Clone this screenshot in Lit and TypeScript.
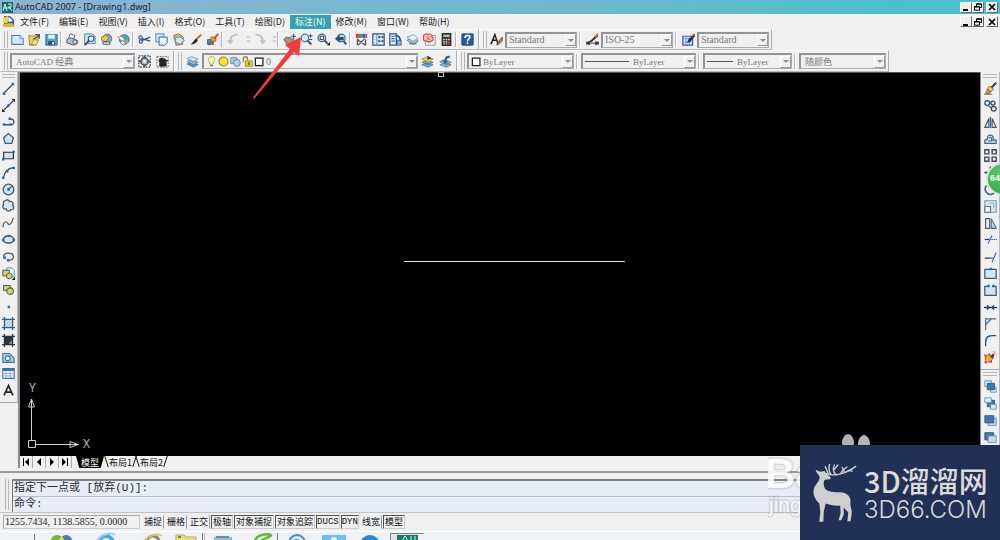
import { LitElement, html, svg, css, nothing } from "lit";
import { customElement, state } from "lit/decorators.js";
import { classMap } from "lit/directives/class-map.js";

const INK = "#3c4a5a";
const BLUE = "#1c6fc4";
const PALE = "#cfe4f4";
const GOLD = "#e8b030";

const glyphs: Record<string, unknown> = {
  fresh: svg`<path d="M1 3h10l4 4v7H1z" fill="#d5ecfa" stroke="#4a7fae" stroke-width="1.3"/><path d="M11 3v4h4" fill="#fff" stroke="#4a7fae"/>`,
  open: svg`<path d="M1 3l5 1 8-2-2 5-4 8H2z" fill="#f3cf6a" stroke="#8a7338"/><path d="M6 8l8-5M9 2h5v5" stroke="#555" stroke-width="1.6" fill="none"/><path d="M4 14l3-6 6 1-3 6z" fill="#f9dc7c" stroke="#a78127"/>`,
  save: svg`<path d="M1 2h14v13H1z" fill="#5e9bd3" stroke="#2c5f92"/><path d="M4 2h8v5H4z" fill="#e5f0f8"/><path d="M4 10h8v5H4z" fill="#28517c"/><path d="M9 11h2v3H9z" fill="#fff"/>`,
  print: svg`<path d="M5 1l6 2-2 5-6-1z" fill="#fff" stroke="${INK}"/><path d="M1 8l5-2 8 3v4l-5 2-8-3z" fill="#aebfd0" stroke="${INK}"/><circle cx="11" cy="11" r="2.5" fill="#dce6ee" stroke="${INK}"/>`,
  preview: svg`<path d="M2 1h9l4 3v9H2z" fill="#bfe0f5" stroke="#4379aa"/><circle cx="10" cy="7" r="3.4" fill="#e6f5fd" stroke="#35577b" stroke-width="1.3"/><path d="M7.5 9.5L2 15" stroke="${INK}" stroke-width="2.2"/>`,
  publish: svg`<circle cx="9" cy="7" r="5.5" fill="#78b1e0" stroke="#375f87"/><path d="M2 5l6-3 3 4-4 5-5-2z" fill="#f2c54e" stroke="#8a6a1d"/><path d="M3 11h9v3H4z" fill="#d9e4ee" stroke="${INK}"/>`,
  globe: svg`<circle cx="9" cy="8" r="6" fill="#5da2da" stroke="#2d5f8e"/><path d="M9 2l5 3-3 4-4-2z" fill="#3fae9c"/><path d="M10 10l4-1-2 5z" fill="#e8b030"/><path d="M1 5l5-1 4 5-3 2z" fill="#f7f2dd" stroke="#87712f" stroke-width=".8"/><path d="M6 9l5 3-3 3-4-3z" fill="#eef6fc" stroke="#4379aa"/>`,
  cut: svg`<path d="M15 5L5 9M15 10L5 7" stroke="${INK}" stroke-width="1.5"/><circle cx="3" cy="5.5" r="2" fill="none" stroke="#345f94" stroke-width="1.5"/><circle cx="3.5" cy="10.5" r="2" fill="none" stroke="#345f94" stroke-width="1.5"/>`,
  copy: svg`<rect x="1" y="1" width="10" height="10" fill="#c8e2f5" stroke="#4a7fae"/><path d="M5 5h10v7l-3 3H5z" fill="#e8f5fd" stroke="#3c6c9b" stroke-width="1.2"/>`,
  paste: svg`<path d="M2 3l6-2 6 4-1 9-8 1z" fill="#eec15c" stroke="#7b622a"/><path d="M4 5h7l4 4-5 5-6-3z" fill="#cce6f7" stroke="#3f75a6"/>`,
  brush: svg`<path d="M15 2L8 9" stroke="#b0763a" stroke-width="2.5"/><path d="M9 7l2 2c-2 4-5 5-9 5 3-2 4-6 7-7z" fill="#2a2c30"/>`,
  block: svg`<path d="M2 8h7v6H2z" fill="#4e8ccb" stroke="#24507e"/><path d="M6 5h6v5H6z" fill="#f1a33c" stroke="#9c5b15"/><path d="M15 1l-5 6" stroke="#c44d28" stroke-width="2.4"/><path d="M3 15l3-4" stroke="#d03a22" stroke-width="2"/>`,
  undo: svg`<path d="M13 2C7 2 4 5 4 10" fill="none" stroke="#bdbdc8" stroke-width="2.4"/><path d="M0 9h8l-4 5z" fill="#bdbdc8"/>`,
  redo: svg`<path d="M3 2c6 0 9 3 9 8" fill="none" stroke="#bdbdc8" stroke-width="2.4"/><path d="M8 9h8l-4 5z" fill="#bdbdc8"/>`,
  drop: svg`<path d="M6 4h4v2H6zM5 9h6l-3 3z" fill="#c9c9d2"/>`,
  pan: svg`<path d="M1 8l3-3 6 1 3 3-3 5H5z" fill="#b98c86" stroke="#6e4d4a"/><path d="M13 1v7M9.500 4h7" stroke="#2c5d90" stroke-width="1.5"/>`,
  zoom: svg`<circle cx="6" cy="6" r="4.500" fill="#d9eefb" stroke="#57789b" stroke-width="1.5"/><path d="M9 9l5 5" stroke="${INK}" stroke-width="2.3"/><path d="M13 1v5M10.500 3.500h5M11 8h4" stroke="#2b5482" stroke-width="1.2"/>`,
  zoomwin: svg`<circle cx="6" cy="6" r="4.700" fill="#b3d3ec" stroke="#4a6b8d" stroke-width="1.5"/><path d="M4 4h4v4H4z" fill="#fff" stroke="#222"/><path d="M9 9l4 4" stroke="${INK}" stroke-width="2.3"/><path d="M12 15h4v-4z" fill="#111"/>`,
  zoomprev: svg`<circle cx="9" cy="6" r="4.700" fill="#c3def2" stroke="#4a6b8d" stroke-width="1.5"/><path d="M12 10l3 4" stroke="${INK}" stroke-width="2.3"/><path d="M1 7l6-5v3h5v4H7v3z" fill="#264e80"/>`,
  props: svg`<path d="M1 1h4v5H1z" fill="#e33a35"/><path d="M5 1h4v5H5z" fill="#37a64c"/><path d="M9 1h4v5H9z" fill="#3559d1"/><path d="M13 1h2v5h-2z" fill="#b34bc4"/><path d="M3 8l10 7M12 7L4 15M3 7v8M13 8v7" stroke="#5a4656" stroke-width="1.5"/>`,
  grid: svg`<path d="M1 1h14v14H1z" fill="#e9f3fb" stroke="#31577f" stroke-width="1.5"/><path d="M6 1v14M3 4h1M3 8h1M3 12h1M8 4h2v2H8zM12 4h2v2h-2zM8 9h2v2H8zM12 9h2v2h-2z" fill="#426e9c" stroke="#426e9c"/>`,
  palette: svg`<path d="M1 1h8v14H1z" fill="#e3f0fa" stroke="#31577f" stroke-width="1.5"/><path d="M3 4h4M3 7h4M3 10h4" stroke="${BLUE}" stroke-width="1.5"/><path d="M8 3c5 0 6 3 6 7" fill="none" stroke="#24476f" stroke-width="2"/><path d="M10 9h5v6h-5z" fill="#86b8e3" stroke="#31577f"/>`,
  sheets: svg`<path d="M1 9l8-4 6 5-6 4z" fill="#9bc5df" stroke="#557d99"/><path d="M1 5l9-3 5 5-7 3z" fill="#e1eef4" stroke="#8398a5"/><path d="M4 13h9" stroke="#72838e" stroke-width="2"/>`,
  markup: svg`<path d="M3 3h12v12H3z" fill="#f3f4f6" stroke="#7f8b96"/><path d="M2 2c2-2 4 0 4 0 3-2 6 1 5 3 3 2 1 5-1 5-2 2-4 1-5 0-4 1-5-2-4-4-1-2 0-4 1-4z" fill="#f7c3c0" stroke="#d8403a" stroke-width="1.300"/><path d="M4 4l5 5M9 4L4 9" stroke="#d8403a"/>`,
  calc: svg`<path d="M2 0h12v16H2z" fill="#332b2b"/><path d="M4 2h8v3H4z" fill="#8fd0a0"/><path d="M4 7h2v2H4zM7 7h2v2H7zM10 7h2v2h-2zM4 10h2v2H4zM7 10h2v2H7zM4 13h2v1H4zM7 13h2v1H7z" fill="#e2d7d7"/><path d="M10 10h2v4h-2z" fill="#d24a3c"/>`,
  help: svg`<rect x="1" y="1" width="14" height="14" rx="1" fill="#235c99" stroke="#173f6d"/><path d="M5 6c0-4 6-4 6-1 0 2-3 2-3 5" stroke="#fff" stroke-width="2" fill="none"/><path d="M7 11.500h2v2H7z" fill="#fff"/>`,
  textstyle: svg`<path d="M1 14L6 2l4 12M3 9h6" stroke="#222" stroke-width="1.800" fill="none"/><path d="M15 5l-5 6-2 4 4-2 4-5z" fill="#c77b39" stroke="#333" stroke-width=".8"/>`,
  dimstyle: svg`<path d="M1 10v5M15 10v5M1 12.500h14M1 12.500l3-2v4zM15 12.500l-3-2v4z" stroke="#222" fill="#222"/><path d="M14 1L6 9l-3 1 3 2 9-8z" fill="#3a3533"/><path d="M15 1l-4 4" stroke="#c77b39" stroke-width="2"/>`,
  tablestyle: svg`<path d="M1 4h12v11H1z" fill="#d7e8fa" stroke="#2f5fae" stroke-width="1.500"/><path d="M1 7h12M5 4v11M9 4v11M1 11h12" stroke="#5f92d8"/><path d="M15 1L8 8l-2 4 4-1 6-7z" fill="#2f2d2d"/><path d="M15 1l-3 3" stroke="#c77b39" stroke-width="2"/>`,
  gear: svg`<path d="M1 1h14v14H1z" fill="none" stroke="#333" stroke-dasharray="2 1.500" stroke-width="1.500"/><circle cx="8" cy="8" r="4.500" fill="#a9b9c7" stroke="#3c4d5d" stroke-width="1.800"/><circle cx="8" cy="8" r="1.700" fill="#eee"/><path d="M8 1v3M8 12v3M1 8h3M12 8h3" stroke="#3c4d5d" stroke-width="2"/>`,
  workspace: svg`<path d="M1 2h14v13H1z" fill="none" stroke="#444" stroke-dasharray="2 1.500"/><path d="M4 4h6l3 2v8H4z" fill="#23272c"/><path d="M3 7h12M7 3v12" stroke="#23272c" stroke-width="1.500"/>`,
  layers: svg`<path d="M1 11l6-2 8 3-6 3z" fill="#5d92bd" stroke="#3e6a90" stroke-width=".8"/><path d="M1 8l6-2 8 3-6 3z" fill="#8db9d9" stroke="#3e6a90" stroke-width=".8"/><path d="M1 4l6-2 8 3-6 3z" fill="#cde3f2" stroke="#5c86a8" stroke-width=".8"/>`,
  bulb: svg`<path d="M8 1c-5 0-6 5-3 8l1 3h4l1-3c3-3 2-8-3-8z" fill="#fcf6a8" stroke="#a29b3a" stroke-width="1.200"/><path d="M6 13h4v2H6z" fill="#777"/>`,
  sun: svg`<circle cx="8" cy="8" r="6.500" fill="#f4e531" stroke="#8d8a3c" stroke-width="1.600"/>`,
  freeze: svg`<path d="M1 2h9v9H1z" fill="#a9cbe0" stroke="#5d8199"/><circle cx="10" cy="10" r="5" fill="#b9d3e2" stroke="#5d8199" stroke-width="1.300"/>`,
  lock: svg`<path d="M2 9V4c0-4 6-4 6 0v2" fill="none" stroke="#9a8d25" stroke-width="2"/><path d="M5 7h10v8H5z" fill="#dfd02e" stroke="#7f7520"/><path d="M9 9h2v4H9z" fill="#5d5618"/>`,
  swatch: svg`<path d="M2 3h11v11H2z" fill="#fff" stroke="#222" stroke-width="1.800"/>`,
  layerprev: svg`<path d="M1 12l6-2 8 2-6 3zM1 9l6-2 8 2-6 3z" fill="#7aaed2" stroke="#3e6a90" stroke-width=".8"/><path d="M1 5l7-3 7 3-6 4z" fill="#f0d24e" stroke="#8d7420" stroke-width=".8"/><path d="M8 1v5l5-2" fill="#333"/>`,
  layerstate: svg`<path d="M1 12l6-2 8 2-6 3zM1 8l6-2 8 3-6 3z" fill="#8fb7d4" stroke="#3e6a90" stroke-width=".8"/><path d="M13 1c-5 0-6 2-6 6L4 5l3 6 5-4-3 0c0-2 2-4 5-4z" fill="#2f608f"/>`,
  line: svg`<path d="M2 14L14 2" stroke="#333" stroke-width="1.500"/><path d="M1 13h3v3H1zM12 1h3v3h-3z" fill="${BLUE}"/>`,
  xline: svg`<path d="M2 14L14 2" stroke="#333" stroke-width="1.500"/><path d="M0 12l4 4H0zM12 0h4v4z" fill="#222"/><circle cx="8" cy="8" r="1.700" fill="${BLUE}"/>`,
  pline: svg`<path d="M2 12h9c5 0 5-7-1-7" fill="none" stroke="#44505c" stroke-width="1.700"/><path d="M1 10h3v3H1zM8 3h3v3H8zM9 10h3v3H9z" fill="${BLUE}"/>`,
  polygon: svg`<path d="M8 2l6 5-2 7H4L2 7z" fill="${PALE}" stroke="#4a5661" stroke-width="1.600"/>`,
  rect: svg`<path d="M2 4h12v8H2z" fill="${PALE}" stroke="#333" stroke-width="1.500"/><path d="M0 11h3v3H0zM13 2h3v3h-3z" fill="${BLUE}"/>`,
  arc: svg`<path d="M2 14C3 7 7 3 14 2" fill="none" stroke="#444" stroke-width="1.500"/><path d="M0 13h3v3H0zM5 5h3v3H5zM13 1h3v3h-3z" fill="${BLUE}"/>`,
  circle: svg`<circle cx="8" cy="8" r="6.500" fill="${PALE}" stroke="#4a5661" stroke-width="1.600"/><path d="M8 8l4-4" stroke="${BLUE}" stroke-width="1.500"/><circle cx="8" cy="8" r="1.800" fill="${BLUE}"/>`,
  cloud: svg`<path d="M4 2c3-2 5 0 5 1 3-1 6 2 4 5 3 2 1 6-2 5-2 3-6 2-6-1-4 1-5-3-3-5-1-2 0-5 2-5z" fill="${PALE}" stroke="#4a5661" stroke-width="1.500"/>`,
  spline: svg`<path d="M1 14c1-8 4-8 6-5s5 1 7-7" fill="none" stroke="#555" stroke-width="1.400"/>`,
  ellipse: svg`<ellipse cx="8" cy="8" rx="6.500" ry="4.500" fill="${PALE}" stroke="#333" stroke-width="1.500"/><path d="M0 7h3v3H0zM13 7h3v3h-3zM7 2h3v3H7z" fill="${BLUE}"/>`,
  elarc: svg`<path d="M3 10C0 6 5 3 9 4c6 0 8 8-1 9" fill="none" stroke="#536170" stroke-width="1.600"/><path d="M2 8h3v3H2zM6 11h3v3H6z" fill="${BLUE}"/>`,
  insert: svg`<path d="M6 1h6l3 3v8H6z" fill="#e5f2fb" stroke="#4a7fae"/><path d="M1 4h8v7H1z" fill="#e8d24d" stroke="#365f88" stroke-width="1.200"/><circle cx="9" cy="11" r="3.500" fill="#e8d24d" stroke="#365f88" stroke-width="1.200"/><path d="M12 16h4v-4z" fill="#111"/>`,
  make: svg`<path d="M2 3h8v6H2z" fill="#e8d24d" stroke="#365f88" stroke-width="1.300"/><circle cx="10" cy="10" r="4" fill="#e8d24d" stroke="#365f88" stroke-width="1.300"/>`,
  point: svg`<path d="M7 7h3v3H7z" fill="${BLUE}"/>`,
  hatch: svg`<path d="M3 3h10v10H3z" fill="#a8cdee"/><path d="M0 3h16M0 13h16M3 0v16M13 0v16" stroke="#2f5f91" stroke-width="1.600"/><path d="M4 8l4-4M4 12l8-8M8 12l4-4" stroke="#fff"/>`,
  gradient: svg`<path d="M3 3h10v10H3z" fill="#2c3340"/><path d="M8 12l5-5v6z" fill="#9a9250"/><path d="M0 3h16M0 13h16M3 0v16M13 0v16" stroke="#253649" stroke-width="1.600"/>`,
  region: svg`<path d="M1 3h8l6 6v5H1z" fill="#a9cdea" stroke="#3d70a3" stroke-width="1.300"/><circle cx="7" cy="9" r="3" fill="#eef6fc" stroke="#3d70a3" stroke-width="1.300"/>`,
  table: svg`<path d="M1 2h14v12H1z" fill="#fff" stroke="#3b6fbb" stroke-width="1.300"/><path d="M1 2h14v3H1z" fill="#3b6fbb"/><path d="M1 8h14M1 11h14M5 4v10M10 4v10" stroke="#7ba3dc"/>`,
  mtext: svg`<path d="M2.500 14L8 2l5.500 12M4.500 10h7" fill="none" stroke="#222" stroke-width="2"/>`,
  erase: svg`<path d="M15 1L9 7" stroke="#35404c" stroke-width="2.500"/><path d="M7 5l5 4-4 3-4-4z" fill="#f3c94d" stroke="#7a6633"/><path d="M4 9l4 3-1 2H2z" fill="#e08575" stroke="#7c4238" stroke-width=".8"/><path d="M0 15h10" stroke="#444"/>`,
  copyobj: svg`<circle cx="4" cy="5" r="3" fill="#d3e5f3" stroke="#3b4a59" stroke-width="1.500"/><path d="M5 8l5 4M8 4h4" stroke="${BLUE}" stroke-width="1.300"/><circle cx="11" cy="5" r="2.500" fill="#d3e5f3" stroke="#3b4a59" stroke-width="1.500"/><circle cx="12" cy="12" r="3" fill="#d3e5f3" stroke="#3b4a59" stroke-width="1.500"/>`,
  mirror: svg`<path d="M6 3v11H1zM10 3v11h5z" fill="#dbe7f0" stroke="#4a5661" stroke-width="1.400"/><path d="M8 1v14" stroke="${BLUE}" stroke-width="1.600"/>`,
  offset: svg`<path d="M1 14h14v-4h-4c3-7-8-9-7-1L1 10z" fill="#cfe4f4" stroke="#46647f" stroke-width="1.500"/><path d="M5 11h4c2-4-2-6-3-3" fill="none" stroke="${BLUE}" stroke-width="1.300"/>`,
  array: svg`<path d="M1 1h5v5H1zM10 1h5v5h-5zM1 10h5v5H1zM10 10h5v5h-5z" fill="#eee" stroke="#3b4a59" stroke-width="1.700"/>`,
  move: svg`<path d="M8 1v14M1 8h14" stroke="#34526f" stroke-width="1.500"/><path d="M8 0l2 3H6zM8 16l2-3H6zM0 8l3 2V6zM16 8l-3 2V6z" fill="#34526f"/>`,
  rotate: svg`<path d="M3 3C-1 9 4 15 9 14s6-5 5-8" fill="none" stroke="#3d6895" stroke-width="2"/>`,
  scale: svg`<path d="M1 1h14v14H1z" fill="#d9e9f5" stroke="#7594ad" stroke-width="1.300"/><path d="M1 8h7v7H1z" fill="#f4f8fb" stroke="#55748d" stroke-width="1.300"/><path d="M6 4h6v6" stroke="#8db4d4" stroke-width="1.500" fill="none"/>`,
  stretch: svg`<path d="M2 2h5v12H2z" fill="#eee" stroke="#4a5661" stroke-width="1.400"/><path d="M9 2l6 12H9z" fill="#bcd9ef" stroke="#3d70a3" stroke-width="1.300"/>`,
  trim: svg`<path d="M1 8h6" stroke="#333" stroke-width="1.500"/><path d="M5 13l5-10" stroke="${BLUE}" stroke-width="1.300"/><path d="M9 8h7" stroke="${BLUE}" stroke-width="1.500" stroke-dasharray="2 1"/>`,
  extend: svg`<path d="M1 10h7" stroke="#333" stroke-width="1.500"/><path d="M8 10h4" stroke="${BLUE}" stroke-width="1.500"/><path d="M10 15l5-12" stroke="${BLUE}" stroke-width="1.300"/>`,
  breakpt: svg`<path d="M1 3h14v11H1z" fill="${PALE}" stroke="#4a5661" stroke-width="1.500"/><path d="M7 1h3v3H7z" fill="${BLUE}"/>`,
  break: svg`<path d="M5 3H1v11h14V3h-4" fill="${PALE}" stroke="#4a5661" stroke-width="1.500"/><path d="M4 1h3v3H4zM10 1h3v3h-3z" fill="${BLUE}"/>`,
  join: svg`<path d="M0 8h16" stroke="#222" stroke-width="1.500"/><path d="M4 5l3 3-3 3zM12 5L9 8l3 3z" fill="#1e4e80" stroke="#1e4e80"/>`,
  chamfer: svg`<path d="M2 8l7-7" stroke="${BLUE}" stroke-width="1.500"/><path d="M2 15V1h13" stroke="#666" stroke-width="1.400" fill="none"/>`,
  fillet: svg`<path d="M2 15V10C2 4 5 2 10 2h5" fill="none" stroke="#444" stroke-width="1.500"/><path d="M2 10C2 4 5 2 10 2" fill="none" stroke="${BLUE}" stroke-width="1.800"/>`,
  explode: svg`<path d="M1 5l3 1 3-3 1 4 4 1-3 3v3l-4-1-4 2 1-4z" fill="${GOLD}" stroke="#c23b21" stroke-width="1.400" stroke-dasharray="3 1"/><path d="M9 8l3-4" stroke="#6f3024" stroke-width="3"/><path d="M12 4l2-3M15 4h1M11 1h2" stroke="#888"/>`,
  front: svg`<path d="M1 1h8v7H1zM8 9h7v6H8z" fill="#dcebf6" stroke="#5b86ab"/><path d="M4 4h9v8H4z" fill="#3e78ae" stroke="#265984"/>`,
  back: svg`<path d="M4 4h9v8H4z" fill="#3e78ae" stroke="#265984"/><path d="M1 1h8v6H1zM8 9h7v6H8z" fill="#dcebf6" stroke="#5b86ab"/>`,
  above: svg`<path d="M5 5h10v9H5z" fill="#c5dcee" stroke="#5b86ab"/><path d="M1 2h11v9H1z" fill="#3e78ae" stroke="#265984"/>`,
  under: svg`<path d="M1 2h11v9H1z" fill="#3e78ae" stroke="#265984"/><path d="M5 6h10v8H5z" fill="#c5dcee" stroke="#5b86ab"/>`,
};

const icon = (name: string) =>
  html`<svg class="icon" viewBox="0 0 16 16" aria-hidden="true">${glyphs[name]}</svg>`;

const MENUS = ["文件(F)", "编辑(E)", "视图(V)", "插入(I)", "格式(O)", "工具(T)", "绘图(D)", "标注(N)", "修改(M)", "窗口(W)", "帮助(H)"];
const STANDARD = [
  ["fresh", "open", "save"],
  ["print", "preview", "publish", "globe"],
  ["cut", "copy", "paste", "brush", "block"],
  ["undo", "drop", "redo", "drop"],
  ["pan", "zoom", "zoomwin", "zoomprev"],
  ["props", "grid", "palette", "sheets", "markup", "calc"],
  ["help"],
];
const DRAW = ["line", "xline", "pline", "polygon", "rect", "arc", "circle", "cloud", "spline", "ellipse", "elarc", "insert", "make", "point", "hatch", "gradient", "region", "table", "mtext"];
const MODIFY = ["erase", "copyobj", "mirror", "offset", "array", "move", "rotate", "scale", "stretch", "trim", "extend", "breakpt", "break", "join", "chamfer", "fillet", "explode"];
const ORDER = ["front", "back", "above", "under"];
const MODES: [string, boolean][] = [
  ["捕捉", false], ["栅格", false], ["正交", false], ["极轴", true], ["对象捕捉", true],
  ["对象追踪", true], ["DUCS", true], ["DYN", true], ["线宽", false], ["模型", true],
];

@customElement("app-root")
export class AppRoot extends LitElement {
  @state() private modes = new Map<string, boolean>(MODES);

  static styles = css`
    :host {
      display: flex; flex-direction: column; position: relative; height: 100vh; overflow: hidden;
      background: #f0f0f0; color: #1c1c1c;
      font: 9px/14px "Noto Sans", "Noto Sans CJK SC", sans-serif;
    }
    * { box-sizing: border-box; }
    button { font: inherit; color: inherit; border: 0; padding: 0; margin: 0; background: none; white-space: nowrap; }
    .title { flex: none; display: flex; align-items: center; height: 14px; padding: 0 2px; gap: 2px;
      background: linear-gradient(90deg, #8cb3d4, #6cb9cf 60%, #4cc0cd 90%); }
    .title h1 { flex: 1; margin: 0; font: 9px/14px "Noto Sans", sans-serif; color: #16222c; }
    .app { width: 11px; height: 11px; }
    .wins { display: flex; }
    .wins button { width: 12px; height: 11px; background: #f0f0f0; border: 1px solid #fff; border-right-color: #666; border-bottom-color: #666; display: grid; place-items: center; }
    .wins button:last-child { margin-left: 2px; }
    .wins svg { width: 8px; height: 8px; }
    .menu { flex: none; display: flex; align-items: center; height: 15px; padding: 0 2px; }
    .menu nav { flex: 1; display: flex; }
    .menu nav button { padding: 0 5px; height: 14px; font: 9px/13px "Noto Sans CJK SC", sans-serif; }
    .menu nav .hot { background: #35a0af; color: #fff; }
    .doc { width: 13px; height: 13px; }
    .row { flex: none; display: flex; align-items: stretch; height: 21px; }
    .row.second { height: 22px; }
    .bar { display: flex; align-items: center; border: 1px solid #fbfbfb; border-right-color: #a9abb0; border-bottom-color: #b7b9bd; padding: 0 2px; }
    .second .bar { gap: 1px; }
    .grip { flex: none; width: 4px; align-self: stretch; margin: 1px 1px; border: 1px solid #b4b7bc; border-width: 0 1px; }
    .tool { flex: none; width: 17px; height: 17px; display: grid; place-items: center; }
    .tool.slim { width: 9px; }
    .icon { width: 13px; height: 13px; display: block; overflow: hidden; }
    .sep { flex: none; width: 4px; height: 15px; border-left: 1px solid #b4b7bc; background: linear-gradient(90deg, #fff 1px, transparent 1px); }
    .combo + .sep { margin: 0 1px 0 2px; }
    .second .combo + .sep { margin: 0 0 0 1px; }
    .combo { display: flex; align-items: center; height: 16px; min-width: 0; border: 2px solid #92949a; border-right: 1px solid #a9abb0; border-bottom: 1px solid #a9abb0; background: #f0f0f0; gap: 1px; padding-left: 2px; }
    .combo .icon { flex: none; width: 11px; height: 11px; }
    .combo select { flex: 1; min-width: 0; width: 0; height: 12px; appearance: none; border: 0; padding: 0; margin: 0; background: none; color: #7a7a7a; opacity: 1; font: 10px/12px "Liberation Serif", "Noto Sans CJK SC", serif; }
    .combo.small select { font-size: 9px; }
    .combo.inset { padding-left: 4px; }
    .combo .stroke { flex: none; width: 44px; border-top: 1px solid #555; margin-right: 3px; }
    .combo .stroke.short { width: 26px; }
    .combo .arrow { flex: none; width: 11px; height: 12px; display: grid; place-items: center; border: 1px solid #fff; border-right-color: #999; border-bottom-color: #999; }
    .arrow::after { content: ""; border: 3px solid transparent; border-top-color: #8d8d8d; border-bottom: 0; }
    .w-space { width: 125px; } .w-layer { width: 216px; } .w-style { width: 72px; }
    .w-color { width: 107px; } .w-line { width: 115px; } .w-weight { width: 89px; } .w-plot { width: 87px; }
    .inner { display: flex; flex: 1; min-height: 0; }
    .side { flex: none; width: 18px; display: flex; flex-direction: column; }
    .side.right { width: 20px; border-left: 1px solid #8a8c90; }
    .strip { flex: none; display: flex; flex-direction: column; align-items: center; border-bottom: 1px solid #a9abb0; border-right: 1px solid #b7b9bd; padding-bottom: 3px; }
    .strip .hgrip { flex: none; align-self: stretch; height: 4px; margin: 2px 2px; border: 1px solid #b4b7bc; border-width: 1px 0; }
    .strip .tools { display: flex; flex-direction: column; }
    .tools.draw { height: 319px; } .tools.modify { height: 286px; } .tools.order { height: 68px; }
    .tools .tool { flex: 1; height: auto; min-height: 0; }
    .center { flex: 1; min-width: 0; display: flex; flex-direction: column; border-left: 2px solid #8a8c90; }
    .view { flex: 1; min-height: 0; position: relative; background: #000; border-top: 1px solid #555; }
    .view svg { position: absolute; }
    .entity { left: 40%; top: 188px; width: 23%; height: 1px; }
    .ucs { left: 5px; bottom: 4px; width: 70px; height: 80px; font: 12px "Noto Sans", sans-serif; }
    .mark { left: 418px; top: -1px; width: 6px; height: 5px; }
    .tabs { flex: none; height: 12px; display: flex; align-items: stretch; }
    .tabs .nav { width: 13px; display: grid; place-items: center; border-right: 1px solid #aaa; }
    .tabs .nav svg { width: 8px; height: 8px; }
    .tabs .tab { position: relative; padding: 0 3px; margin-right: 2px; font: 9px/11px "Noto Sans CJK SC", sans-serif; color: #111; }
    .tabs .tab::before, .tabs .tab::after { content: ""; position: absolute; top: 0; bottom: 1px; border-left: 1px solid #111; }
    .tabs .tab::before { left: 0; transform: skewX(18deg); }
    .tabs .tab::after { right: 0; transform: skewX(-18deg); }
    .tabs .tab.on { margin-left: 4px; padding: 0 5px; background: #000; color: #fff; clip-path: polygon(0 0, 100% 0, 88% 100%, 12% 100%); }
    .cmd { flex: none; display: flex; height: 42px; margin-top: 3px; border-top: 2px solid #96989c; padding-top: 6px; border-bottom: 1px solid #c0c2c6; }
    .cmd .grip { margin: 0 3px 2px 5px; }
    .log { flex: 1; display: flex; flex-direction: column; background: #e6edf8; border-left: 1px solid #777; border-top: 2px solid #808285;
      font: 11px/14px "Liberation Mono", "Noto Sans CJK SC", monospace; color: #2a2a2a; }
    .log p { margin: 0; height: 16px; border-bottom: 1px solid #b9bec6; padding-left: 1px; }
    .log label { display: flex; padding-left: 1px; height: 15px; line-height: 15px; }
    .log input { flex: 1; border: 0; background: none; outline: 0; font: inherit; padding: 0; }
    .status { flex: none; display: flex; align-items: center; gap: 1px; height: 18px; padding-left: 3px; }
    .coord { width: 137px; height: 14px; margin-right: 1px; padding-left: 1px; border: 1px solid #a5a7ab; border-right-color: #ccc; border-bottom-color: #ccc; font: 10px/12px "Liberation Serif", serif; }
    .mode { height: 14px; padding: 0 1px; border: 1px solid transparent; border-right-color: #999; font: 9px/12px "Noto Sans CJK SC", sans-serif; color: #111; }
    .mode.on { border-color: #555 #ccc #ccc #555; }
    .mode.latin { padding: 0; font: 9px/12px "Liberation Mono", monospace; }
    .task { flex: none; height: 9px; background: #eef1f6; border-top: 1px solid #fdfdfd; overflow: hidden; }
    .task svg { display: block; height: 9px; width: 430px; }
    .pointer { position: absolute; left: 250px; top: 34px; width: 54px; height: 66px; pointer-events: none; }
    .ball { position: absolute; right: -20px; top: 162px; width: 34px; height: 34px; border-radius: 50%; border: 2px solid #dcdedc; background: radial-gradient(circle at 50% 30%, #58ce6c, #2fa94a); color: #fff; font: bold 9px/29px "Liberation Sans", sans-serif; text-align: left; padding-left: 2px; }
    .stamp { position: absolute; right: 120px; bottom: 13px; width: 112px; height: 96px; pointer-events: none; font-family: "Liberation Sans", sans-serif; }
    .stamp text { fill: #fff; fill-opacity: .85; stroke: #999; stroke-opacity: .3; stroke-width: 3px; paint-order: stroke; }
    .brand { position: absolute; right: 0; bottom: 0; width: 200px; height: 95px; padding: 0 0 0 12px; display: flex; align-items: center; gap: 6px; background: #213056; color: #dadad8; }
    .brand svg { flex: none; width: 46px; height: 60px; }
    .brand div { display: flex; flex-direction: column; white-space: nowrap; }
    .brand strong { font: 500 29px/34px "Noto Sans CJK SC", sans-serif; }
    .brand span { font: 300 24px/26px "Inter", sans-serif; }
  `;

  private toggle(name: string) {
    const next = new Map(this.modes);
    next.set(name, !next.get(name));
    this.modes = next;
  }

  private tool(name: string) {
    return html`<button class=${classMap({ tool: true, slim: name === "drop" })} aria-label=${name}>${icon(name)}</button>`;
  }

  private combo(label: string, value: string, kind: string, lead: unknown = nothing) {
    return html`<span class="combo ${kind}">${lead}
      <select aria-label=${label}><option>${value}</option></select><span class="arrow"></span></span>`;
  }

  private windowButtons() {
    return html`<div class="wins">
      <button aria-label="最小化"><svg viewBox="0 0 8 8"><path d="M1 6h5v2H1z"/></svg></button>
      <button aria-label="还原"><svg viewBox="0 0 8 8"><path d="M2.500 3V.8h5v3.700H6M.5 3.500h5v3.700h-5zM.5 4h5M2.500 1.200h5" fill="none" stroke="#000"/></svg></button>
      <button aria-label="关闭"><svg viewBox="0 0 8 8"><path d="M1 1l6 6M7 1L1 7" stroke="#000" stroke-width="1.700"/></svg></button>
    </div>`;
  }

  render() {
    return html`
      <header class="title">
        <svg class="app" viewBox="0 0 11 11"><path d="M0 0h11v11H0z" fill="#1b6c66"/><path d="M1 9l2-7 2 7M6 2h3v3H6M7 5l3 4M1 6h8" stroke="#d6f1ec" fill="none"/></svg>
        <h1>AutoCAD 2007 - [Drawing1.dwg]</h1>
        ${this.windowButtons()}
      </header>
      <div class="menu">
        <svg class="doc" viewBox="0 0 13 13"><path d="M2 1h6l4 4v7H2z" fill="#2c63a8"/><path d="M1 3l5-2 2 4-3 3-4 0z" fill="#f2cf3b"/><path d="M1 9l9-1 3 4H1z" fill="#e3b53a"/><path d="M7 2l4 4-4 1z" fill="#eaf3fb"/></svg>
        <nav>${MENUS.map((m) => html`<button class=${m === "标注(N)" ? "hot" : ""}>${m}</button>`)}</nav>
        ${this.windowButtons()}
      </div>
      <div class="row">
        <div class="bar"><span class="grip"></span>
          ${STANDARD.map((g, i) => html`${i ? html`<span class="sep"></span>` : nothing}${g.map((n) => this.tool(n))}`)}
        </div>
        <div class="bar"><span class="grip"></span>
          ${this.tool("textstyle")}${this.combo("文字样式", "Standard", "w-style")}
          <span class="sep"></span>${this.tool("dimstyle")}${this.combo("标注样式", "ISO-25", "w-style")}
          <span class="sep"></span>${this.tool("tablestyle")}${this.combo("表格样式", "Standard", "w-style")}
        </div>
      </div>
      <div class="row second">
        <div class="bar"><span class="grip"></span>
          ${this.combo("工作空间", "AutoCAD 经典", "w-space small inset")}${this.tool("gear")}${this.tool("workspace")}
        </div>
        <div class="bar"><span class="grip"></span>
          ${this.tool("layers")}
          ${this.combo("图层", "0", "w-layer", ["bulb", "sun", "freeze", "lock", "swatch"].map(icon))}
          ${this.tool("layerprev")}${this.tool("layerstate")}
        </div>
        <div class="bar"><span class="grip"></span>
          ${this.combo("颜色", "ByLayer", "w-color small", icon("swatch"))}<span class="sep"></span>
          ${this.combo("线型", "ByLayer", "w-line small", html`<i class="stroke"></i>`)}<span class="sep"></span>
          ${this.combo("线宽", "ByLayer", "w-weight small", html`<i class="stroke short"></i>`)}<span class="sep"></span>
          ${this.combo("打印样式", "随颜色", "w-plot small inset")}
        </div>
      </div>
      <main class="inner">
        <aside class="side"><div class="strip"><span class="hgrip"></span><div class="tools draw">${DRAW.map((n) => this.tool(n))}</div></div></aside>
        <section class="center">
          <div class="view">
            <svg class="mark" viewBox="0 0 6 5"><path d="M.5.5h5v4h-5z" fill="#000" stroke="#ccc"/></svg>
            <svg class="entity" preserveAspectRatio="none" viewBox="0 0 10 1"><path d="M0 0h10v1H0z" fill="#e4e4e4"/></svg>
            <svg class="ucs" viewBox="0 0 70 80">
              <path d="M3.500 68.500h7v7h-7zM6.500 68V27M11 72.500h43M6.500 27l-3 8h6zM53 72.500l-8-3v6z" fill="none" stroke="#cfcfcf"/>
              <text x="4" y="20" fill="#b8b8b8">Y</text>
              <text x="58" y="76" fill="#b8b8b8">X</text>
            </svg>
          </div>
          <div class="tabs">
            <button class="nav" aria-label="第一个"><svg viewBox="0 0 8 8"><path d="M1 0h1v8H1zM7 0v8L3 4z"/></svg></button>
            <button class="nav" aria-label="上一个"><svg viewBox="0 0 8 8"><path d="M6 0v8L2 4z"/></svg></button>
            <button class="nav" aria-label="下一个"><svg viewBox="0 0 8 8"><path d="M2 0v8l4-4z"/></svg></button>
            <button class="nav" aria-label="最后一个"><svg viewBox="0 0 8 8"><path d="M6 0h1v8H6zM1 0v8l4-4z"/></svg></button>
            <button class="tab on">模型</button><button class="tab">布局1</button><button class="tab">布局2</button>
          </div>
        </section>
        <aside class="side right">
          <div class="strip"><span class="hgrip"></span><div class="tools modify">${MODIFY.map((n) => this.tool(n))}</div></div>
          <div class="strip"><span class="hgrip"></span><div class="tools order">${ORDER.map((n) => this.tool(n))}</div></div>
        </aside>
      </main>
      <section class="cmd">
        <span class="grip"></span>
        <div class="log"><p>指定下一点或 [放弃(U)]:</p><label>命令:<input type="text" /></label></div>
      </section>
      <footer class="status">
        <span class="coord">1255.7434, 1138.5855, 0.0000</span>
        ${MODES.map(([n]) => html`<button class=${classMap({ mode: true, on: !!this.modes.get(n), latin: /^[A-Z]+$/.test(n) })}
          aria-pressed=${this.modes.get(n) ? "true" : "false"} @click=${() => this.toggle(n)}>${n}</button>`)}
      </footer>
      <div class="task">
        <svg viewBox="0 0 430 9">
          <path d="M34.500 2v7M202.500 1v8M277.500 1v8" stroke="#777"/>
          <path d="M204.500 1v8" stroke="#bbb"/>
          <circle cx="57" cy="9" r="6" fill="#6dbb32"/><circle cx="66" cy="9" r="6" fill="#3583c6"/><path d="M58 9l4-5 3 5z" fill="#f5d640"/>
          <circle cx="106" cy="11" r="7" fill="none" stroke="#48a9df" stroke-width="4"/><path d="M97 9c5-7 14-9 18-6" fill="none" stroke="#8fd2f3" stroke-width="2"/>
          <circle cx="153" cy="10" r="6" fill="none" stroke="#718391" stroke-width="3"/><path d="M144 9c6-6 13-8 18-5" fill="none" stroke="#efc349" stroke-width="2"/>
          <path d="M176 3h8l2 2h10v4h-20z" fill="#eddc88" stroke="#c0a74a"/><path d="M178 4h3v2h-3z" fill="#3aa04d"/>
          <path d="M214 5h18v4h-18z" fill="#8fbfd6"/><path d="M216 4h13v2h-13z" fill="#5595b5"/>
          <path d="M255 9c1-6 12-8 16-6-1 3-8 3-10 6" fill="none" stroke="#62b834" stroke-width="2.500"/>
          <circle cx="297" cy="11" r="8" fill="#d7e9f7" stroke="#5d88ad" stroke-width="2"/><circle cx="297" cy="11" r="4" fill="#4a97d8"/>
          <path d="M322 3h24v6h-24z" fill="#64c0f5"/><circle cx="334" cy="8" r="3" fill="#e8f6fe"/>
          <circle cx="370" cy="13" r="10" fill="#2188df"/>
          <path d="M390.500 9V1.500h33" fill="#e3e3e6" stroke="#808287"/><path d="M397 3h21v6h-21z" fill="#18796f"/><path d="M402 9l3-5 3 5M411 4v5M415 4v5" stroke="#dff5f0" fill="none"/>
        </svg>
      </div>
      <svg class="pointer" viewBox="0 0 54 66"><path d="M3 63.500L40 15l-5-4L51 3l-2 19-5-4L4 65z" fill="#f23a36"/></svg>
      <div class="ball">64</div>
      <svg class="stamp" viewBox="0 0 112 96">
        <ellipse cx="80" cy="12" rx="6" ry="9" fill="#b4b4b4"/><ellipse cx="96" cy="13" rx="6" ry="9" fill="#b4b4b4"/>
        <text x="-3" y="57" font-size="42" font-weight="bold">Ba</text>
        <text x="1" y="81" font-size="21">jing</text>
      </svg>
      <section class="brand">
        <svg viewBox="185 115 135 178" fill="#cfcfce" aria-hidden="true">
          <path d="M195 135l13 6 14-2 5 9 13 9-2 6-16 2c-5 8-4 19 2 27 8 9 25 9 43 10 24 1 34 15 31 31-1 9 5 20 4 31l-3 24h-10l3-26-14-15 1 20-8 18h-8l6-21-1-23c-15 3-31-3-43-6l-6 25-1 29h-12l3-30-3-24c-15-13-21-31-15-47 5-12 15-18 16-30-1-8-10-13-12-23z"/>
          <path d="M224 146c24 10 60 2 90-21M233 148l-9-22M241 149c-7-8-8-16-5-30M255 149c-9-8-9-18-4-28M251 134l10-13M270 145c4-8 10-13 18-18M280 140l-6-12M292 137l12 2" fill="none" stroke="#cfcfce" stroke-width="4" stroke-linecap="round"/>
        </svg>
        <div><strong>3D溜溜网</strong><span>3D66.COM</span></div>
      </section>
    `;
  }
}
